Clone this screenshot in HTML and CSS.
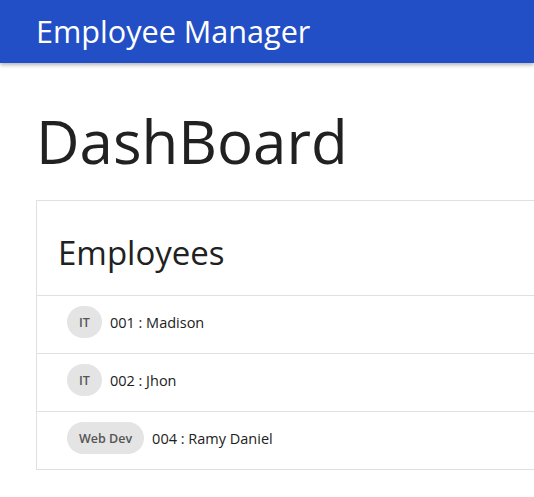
FILE: index.html
```html
<!DOCTYPE html>
<html>
<head>
<meta charset="utf-8">
<link rel="stylesheet" href="styles.css">
</head>
<body>
<header class="topbar">
  <span class="brand">Employee Manager</span>
</header>
<main class="content">
  <h1 class="page-title">DashBoard</h1>
  <section class="card">
    <h2 class="card-title">Employees</h2>
    <ul class="emp-list">
      <li class="emp-row"><span class="chip">IT</span><span class="emp-name">001 : Madison</span></li>
      <li class="emp-row"><span class="chip">IT</span><span class="emp-name">002 : Jhon</span></li>
      <li class="emp-row"><span class="chip">Web Dev</span><span class="emp-name">004 : Ramy Daniel</span></li>
    </ul>
  </section>
</main>
</body>
</html>
```
FILE: styles.css
```css
html, body {
  margin: 0;
  padding: 0;
  background: #fff;
  overflow: hidden;
  font-family: "Open Sans", "Noto Sans", sans-serif;
  color: #212121;
}
.topbar {
  height: 63px;
  background: #234fc6;
  box-shadow: 0 2px 4px rgba(0,0,0,0.3);
  display: flex;
  align-items: center;
  padding-left: 36px;
}
.brand {
  color: #fff;
  font-size: 30.6px;
  line-height: 1;
  margin-top: -1px;
}
.content {
  padding: 0 0 0 36px;
}
.page-title {
  margin: 42px 0 23px 0;
  font-size: 60px;
  font-weight: 400;
  line-height: 1.2;
  color: #212121;
}
.card {
  width: 600px;
  border: 1px solid #e0e0e0;
  background: #fff;
}
.card-title {
  margin: 0;
  padding: 35px 21px 25px;
  height: 34px;
  font-size: 33px;
  font-weight: 400;
  line-height: 34px;
  border-bottom: 1px solid #e0e0e0;
}
.emp-list {
  list-style: none;
  margin: 0;
  padding: 0;
}
.emp-row {
  height: 32px;
  display: flex;
  align-items: center;
  gap: 8px;
  padding: 10px 0 15px 30px;
  border-bottom: 1px solid #e0e0e0;
}
.emp-row:last-child { border-bottom: none; }
.chip {
  height: 32px;
  padding: 0 12px;
  border-radius: 16px;
  background: #e4e4e4;
  color: #555;
  font-size: 12.5px;
  font-weight: 600;
  display: flex;
  align-items: center;
}
.emp-name {
  font-size: 14.5px;
  color: #212121;
}
```
